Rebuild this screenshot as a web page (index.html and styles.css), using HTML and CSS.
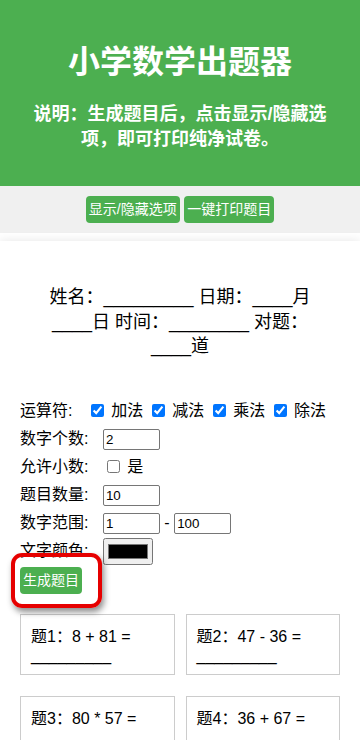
FILE: index.html
```html
<!DOCTYPE html>
<html lang="zh-CN">
<head>
<meta charset="utf-8">
<meta name="viewport" content="width=device-width, initial-scale=1">
<title>小学数学出题器</title>
<link rel="stylesheet" href="styles.css">
</head>
<body>
<header class="header">
  <h1 class="title">小学数学出题器</h1>
  <p class="subtitle">说明：生成题目后，点击显示/隐藏选项，即可打印纯净试卷。</p>
</header>
<div class="controls">
  <button class="btn">显示/隐藏选项</button> <button class="btn">一键打印题目</button>
</div>
<main class="container">
  <div class="info">姓名：_________ 日期：____月____日 时间：________ 对题：____道</div>
  <div class="options">
    <div class="row"><span class="label">运算符:</span> <input type="checkbox" class="cb" checked> 加法 <input type="checkbox" class="cb" checked> 减法 <input type="checkbox" class="cb" checked> 乘法 <input type="checkbox" class="cb" checked> 除法</div>
    <div class="row"><span class="label">数字个数:</span> <input type="text" class="num" value="2"></div>
    <div class="row"><span class="label">允许小数:</span> <input type="checkbox" class="cb"> 是</div>
    <div class="row"><span class="label">题目数量:</span> <input type="text" class="num" value="10"></div>
    <div class="row"><span class="label">数字范围:</span> <input type="text" class="num" value="1"> - <input type="text" class="num" value="100"></div>
    <div class="row"><span class="label">文字颜色:</span> <input type="color" class="color" value="#000000"></div>
    <button class="btn gen">生成题目</button>
    <div class="highlight"></div>
  </div>
  <div class="grid">
    <div class="card">题1：8 + 81 = _________</div>
    <div class="card">题2：47 - 36 = _________</div>
    <div class="card">题3：80 * 57 = _________</div>
    <div class="card">题4：36 + 67 = _________</div>
  </div>
</main>
</body>
</html>
```

FILE: styles.css
```css
* { box-sizing: border-box; }
html, body {
  margin: 0;
  padding: 0;
  background: #ffffff;
  font-family: "Liberation Sans", "Noto Sans CJK SC", sans-serif;
  color: #000;
}
.header {
  background: #4caf50;
  color: #fff;
  text-align: center;
  padding: 42px 20px 34px;
}
.title {
  margin: 0 0 20px;
  font-size: 32px;
  line-height: 40px;
  font-weight: bold;
}
.subtitle {
  margin: 0;
  font-size: 18px;
  line-height: 25px;
  font-weight: bold;
}
.controls {
  background: #f0f0f0;
  text-align: center;
  padding: 10px 0;
  height: 47px;
}
.btn {
  background: #4caf50;
  color: #fff;
  border: none;
  border-radius: 4px;
  height: 27px;
  padding: 0 3px;
  font-family: "Liberation Sans", "Noto Sans CJK SC", sans-serif;
  font-size: 14px;
  line-height: 27px;
  vertical-align: top;
  cursor: pointer;
}
.container {
  background: #fff;
  margin-top: 8px;
  padding: 20px;
  box-shadow: 0 0 10px rgba(0, 0, 0, 0.1);
}
.info {
  margin: 24px 0 38px;
  padding: 0 20px;
  text-align: center;
  font-size: 18px;
  line-height: 24.5px;
}
.options {
  position: relative;
  font-size: 16px;
}
.row {
  height: 28px;
  line-height: 28px;
  white-space: nowrap;
}
.label {
  margin-right: 10px;
}
.cb {
  width: 13px;
  height: 13px;
  margin: 0 3px 0 4px;
  vertical-align: -1px;
}
.num {
  width: 57px;
  height: 21px;
  border: 1px solid #767676;
  border-radius: 2px;
  padding: 1px 2px;
  font-family: "Liberation Sans", sans-serif;
  font-size: 13.33px;
  vertical-align: middle;
}
.color {
  width: 50px;
  height: 27px;
  vertical-align: middle;
  margin: 0;
}
.gen {
  display: block;
  margin-top: 2px;
}
.highlight {
  position: absolute;
  left: -9px;
  top: 156px;
  width: 91px;
  height: 55px;
  border: 4px solid #e60000;
  border-radius: 11px;
  box-shadow: 2px 4px 6px rgba(0, 0, 0, 0.45);
}
.grid {
  display: grid;
  grid-template-columns: 1fr 1fr;
  gap: 21px 11px;
  margin-top: 20px;
}
.card {
  border: 1px solid #ccc;
  padding: 12px 10px 9px;
  font-size: 16px;
  line-height: 19px;
}
```
